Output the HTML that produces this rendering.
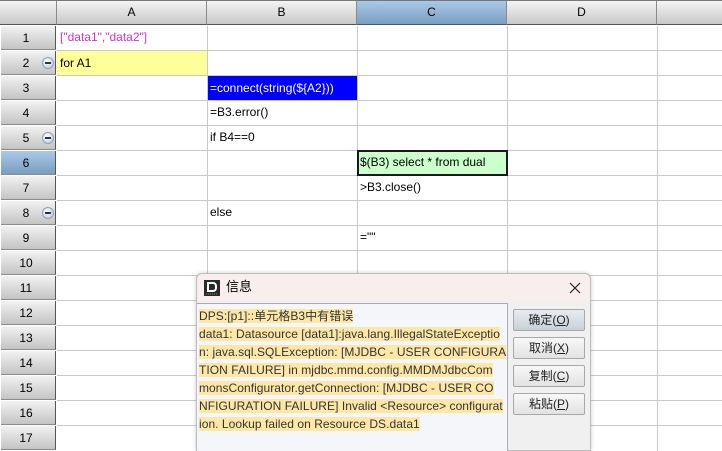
<!DOCTYPE html>
<html><head><meta charset="utf-8"><style>
*{margin:0;padding:0;box-sizing:border-box}
body{width:722px;height:451px;overflow:hidden;background:#fff;position:relative;font-family:"Liberation Sans","Noto Sans CJK SC",sans-serif;font-size:12px}
.a{position:absolute}
.ch{position:absolute;top:1px;height:24px;background:linear-gradient(#f4f4f4,#c8c8c8);border-right:1px solid #8a8a8a;border-bottom:1px solid #555;text-align:center;line-height:23px;font-size:12px;color:#000}
.rh{position:absolute;left:1px;width:55px;height:24px;background:linear-gradient(#f2f2f2,#c4c4c4);border-bottom:1px solid #8a8a8a;border-right:1px solid #555;line-height:24px;font-size:12px}
.rh span{position:absolute;left:0;width:50px;text-align:center}
.sel{background:linear-gradient(#a9c9e8,#7a9ebf)}
.m{position:absolute;left:41px;top:6px;width:12px;height:12px;border-radius:50%;background:radial-gradient(circle at 40% 35%,#fff,#b8c8dc);border:1px solid #8aa0b8}
.m:after{content:"";position:absolute;left:2px;top:4px;width:6px;height:2px;background:#333}
.vl{position:absolute;top:26px;width:1px;height:425px;background:#c8c8c8}
.hl{position:absolute;left:57px;width:665px;height:1px;background:#c8c8c8}
.t{position:absolute;height:24px;line-height:24px;padding-left:3px;white-space:nowrap}
.btn{position:absolute;left:513px;width:72px;height:22px;border:1px solid #a8a8a8;border-radius:2px;background:linear-gradient(#f8f8f8,#e2e2e2);text-align:center;line-height:20px;font-size:12px;color:#222}
.hi{background:#fde7a6}
</style></head><body>
<div class="a" style="left:0;top:0;width:722px;height:1px;background:#777"></div>
<div class="ch" style="left:0;width:57px"></div>
<div class="ch" style="left:57px;width:150px">A</div>
<div class="ch" style="left:207px;width:150px">B</div>
<div class="ch sel" style="left:357px;width:150px">C</div>
<div class="ch" style="left:507px;width:150px">D</div>
<div class="ch" style="left:657px;width:65px;border-right:none"></div>

<div class="rh" style="top:26px"><span>1</span></div>
<div class="rh" style="top:51px"><span>2</span><i class="m"></i></div>
<div class="rh" style="top:76px"><span>3</span></div>
<div class="rh" style="top:101px"><span>4</span></div>
<div class="rh" style="top:126px"><span>5</span><i class="m"></i></div>
<div class="rh sel" style="top:151px"><span>6</span></div>
<div class="rh" style="top:176px"><span>7</span></div>
<div class="rh" style="top:201px"><span>8</span><i class="m"></i></div>
<div class="rh" style="top:226px"><span>9</span></div>
<div class="rh" style="top:251px"><span>10</span></div>
<div class="rh" style="top:276px"><span>11</span></div>
<div class="rh" style="top:301px"><span>12</span></div>
<div class="rh" style="top:326px"><span>13</span></div>
<div class="rh" style="top:351px"><span>14</span></div>
<div class="rh" style="top:376px"><span>15</span></div>
<div class="rh" style="top:401px"><span>16</span></div>
<div class="rh" style="top:426px"><span>17</span></div>

<div class="a" style="left:57px;top:51px;width:150px;height:24px;background:#ffff99"></div>
<div class="a" style="left:207px;top:76px;width:150px;height:24px;background:#0000ff"></div>
<div class="vl" style="left:207px"></div><div class="vl" style="left:357px"></div><div class="vl" style="left:507px"></div><div class="vl" style="left:657px"></div>
<div class="hl" style="top:50px"></div><div class="hl" style="top:75px"></div><div class="hl" style="top:100px"></div><div class="hl" style="top:125px"></div><div class="hl" style="top:150px"></div><div class="hl" style="top:175px"></div><div class="hl" style="top:200px"></div><div class="hl" style="top:225px"></div><div class="hl" style="top:250px"></div><div class="hl" style="top:275px"></div><div class="hl" style="top:300px"></div><div class="hl" style="top:325px"></div><div class="hl" style="top:350px"></div><div class="hl" style="top:375px"></div><div class="hl" style="top:400px"></div><div class="hl" style="top:425px"></div>
<div class="a" style="left:357px;top:150px;width:151px;height:26px;background:#ccffcc;border:2px solid #1a1a1a"></div>

<div class="t" style="left:57px;top:25px;color:#cc33cc">["data1","data2"]</div>
<div class="t" style="left:57px;top:51px">for A1</div>
<div class="t" style="left:207px;top:76px;color:#fff">=connect(string(${A2}))</div>
<div class="t" style="left:207px;top:100px">=B3.error()</div>
<div class="t" style="left:207px;top:125px">if B4==0</div>
<div class="t" style="left:357px;top:150px">$(B3) select * from dual</div>
<div class="t" style="left:357px;top:175px">&gt;B3.close()</div>
<div class="t" style="left:207px;top:200px">else</div>
<div class="t" style="left:357px;top:225px">=""</div>

<!-- dialog -->
<div class="a" style="left:196px;top:273px;width:395px;height:178px;background:#f0f0f0;border:1px solid #bdbdbd;border-radius:6px 6px 0 0;box-shadow:0 0 4px rgba(0,0,0,.2)"></div>
<div class="a" style="left:197px;top:274px;width:393px;height:28px;background:#f8eeee;border-radius:6px 6px 0 0"></div>
<svg class="a" style="left:204px;top:280px" width="16" height="16" viewBox="0 0 16 16"><rect x="0" y="0" width="16" height="16" fill="#2a2a2a"/><path d="M4 3h5a3 3 0 0 1 3 3v2a3 3 0 0 1-3 3H4z" fill="none" stroke="#fff" stroke-width="2"/><path d="M2 14h12" stroke="#888" stroke-width="1" stroke-dasharray="1 1"/></svg>
<div class="a" style="left:226px;top:279px;font-size:13px;line-height:16px">信息</div>
<svg class="a" style="left:569px;top:282px" width="12" height="12" viewBox="0 0 12 12"><path d="M1 1L11 11M11 1L1 11" stroke="#222" stroke-width="1.2"/></svg>
<div class="a" style="left:197px;top:303px;width:311px;height:148px;background:#f4f6fa;border:1px solid #aab;border-left:none;border-bottom:none"></div>
<div class="a" style="left:199px;top:307px;font-size:12px;line-height:18px;color:#333;white-space:nowrap;letter-spacing:0.05px">
<span class="hi">DPS:[p1]::单元格B3中有错误</span><br>
<span class="hi">data1: Datasource [data1]:java.lang.IllegalStateExceptio</span><br>
<span class="hi">n: java.sql.SQLException: [MJDBC - USER CONFIGURA</span><br>
<span class="hi">TION FAILURE] in mjdbc.mmd.config.MMDMJdbcCom</span><br>
<span class="hi">monsConfigurator.getConnection: [MJDBC - USER CO</span><br>
<span class="hi">NFIGURATION FAILURE] Invalid &lt;Resource&gt; configurat</span><br>
<span class="hi">ion. Lookup failed on Resource DS.data1</span></div>
<div class="btn" style="top:309px;background:linear-gradient(#e8ecf0,#c9d0d8)">确定(<u>O</u>)</div>
<div class="btn" style="top:337px">取消(<u>X</u>)</div>
<div class="btn" style="top:365px">复制(<u>C</u>)</div>
<div class="btn" style="top:393px">粘贴(<u>P</u>)</div>
</body></html>
